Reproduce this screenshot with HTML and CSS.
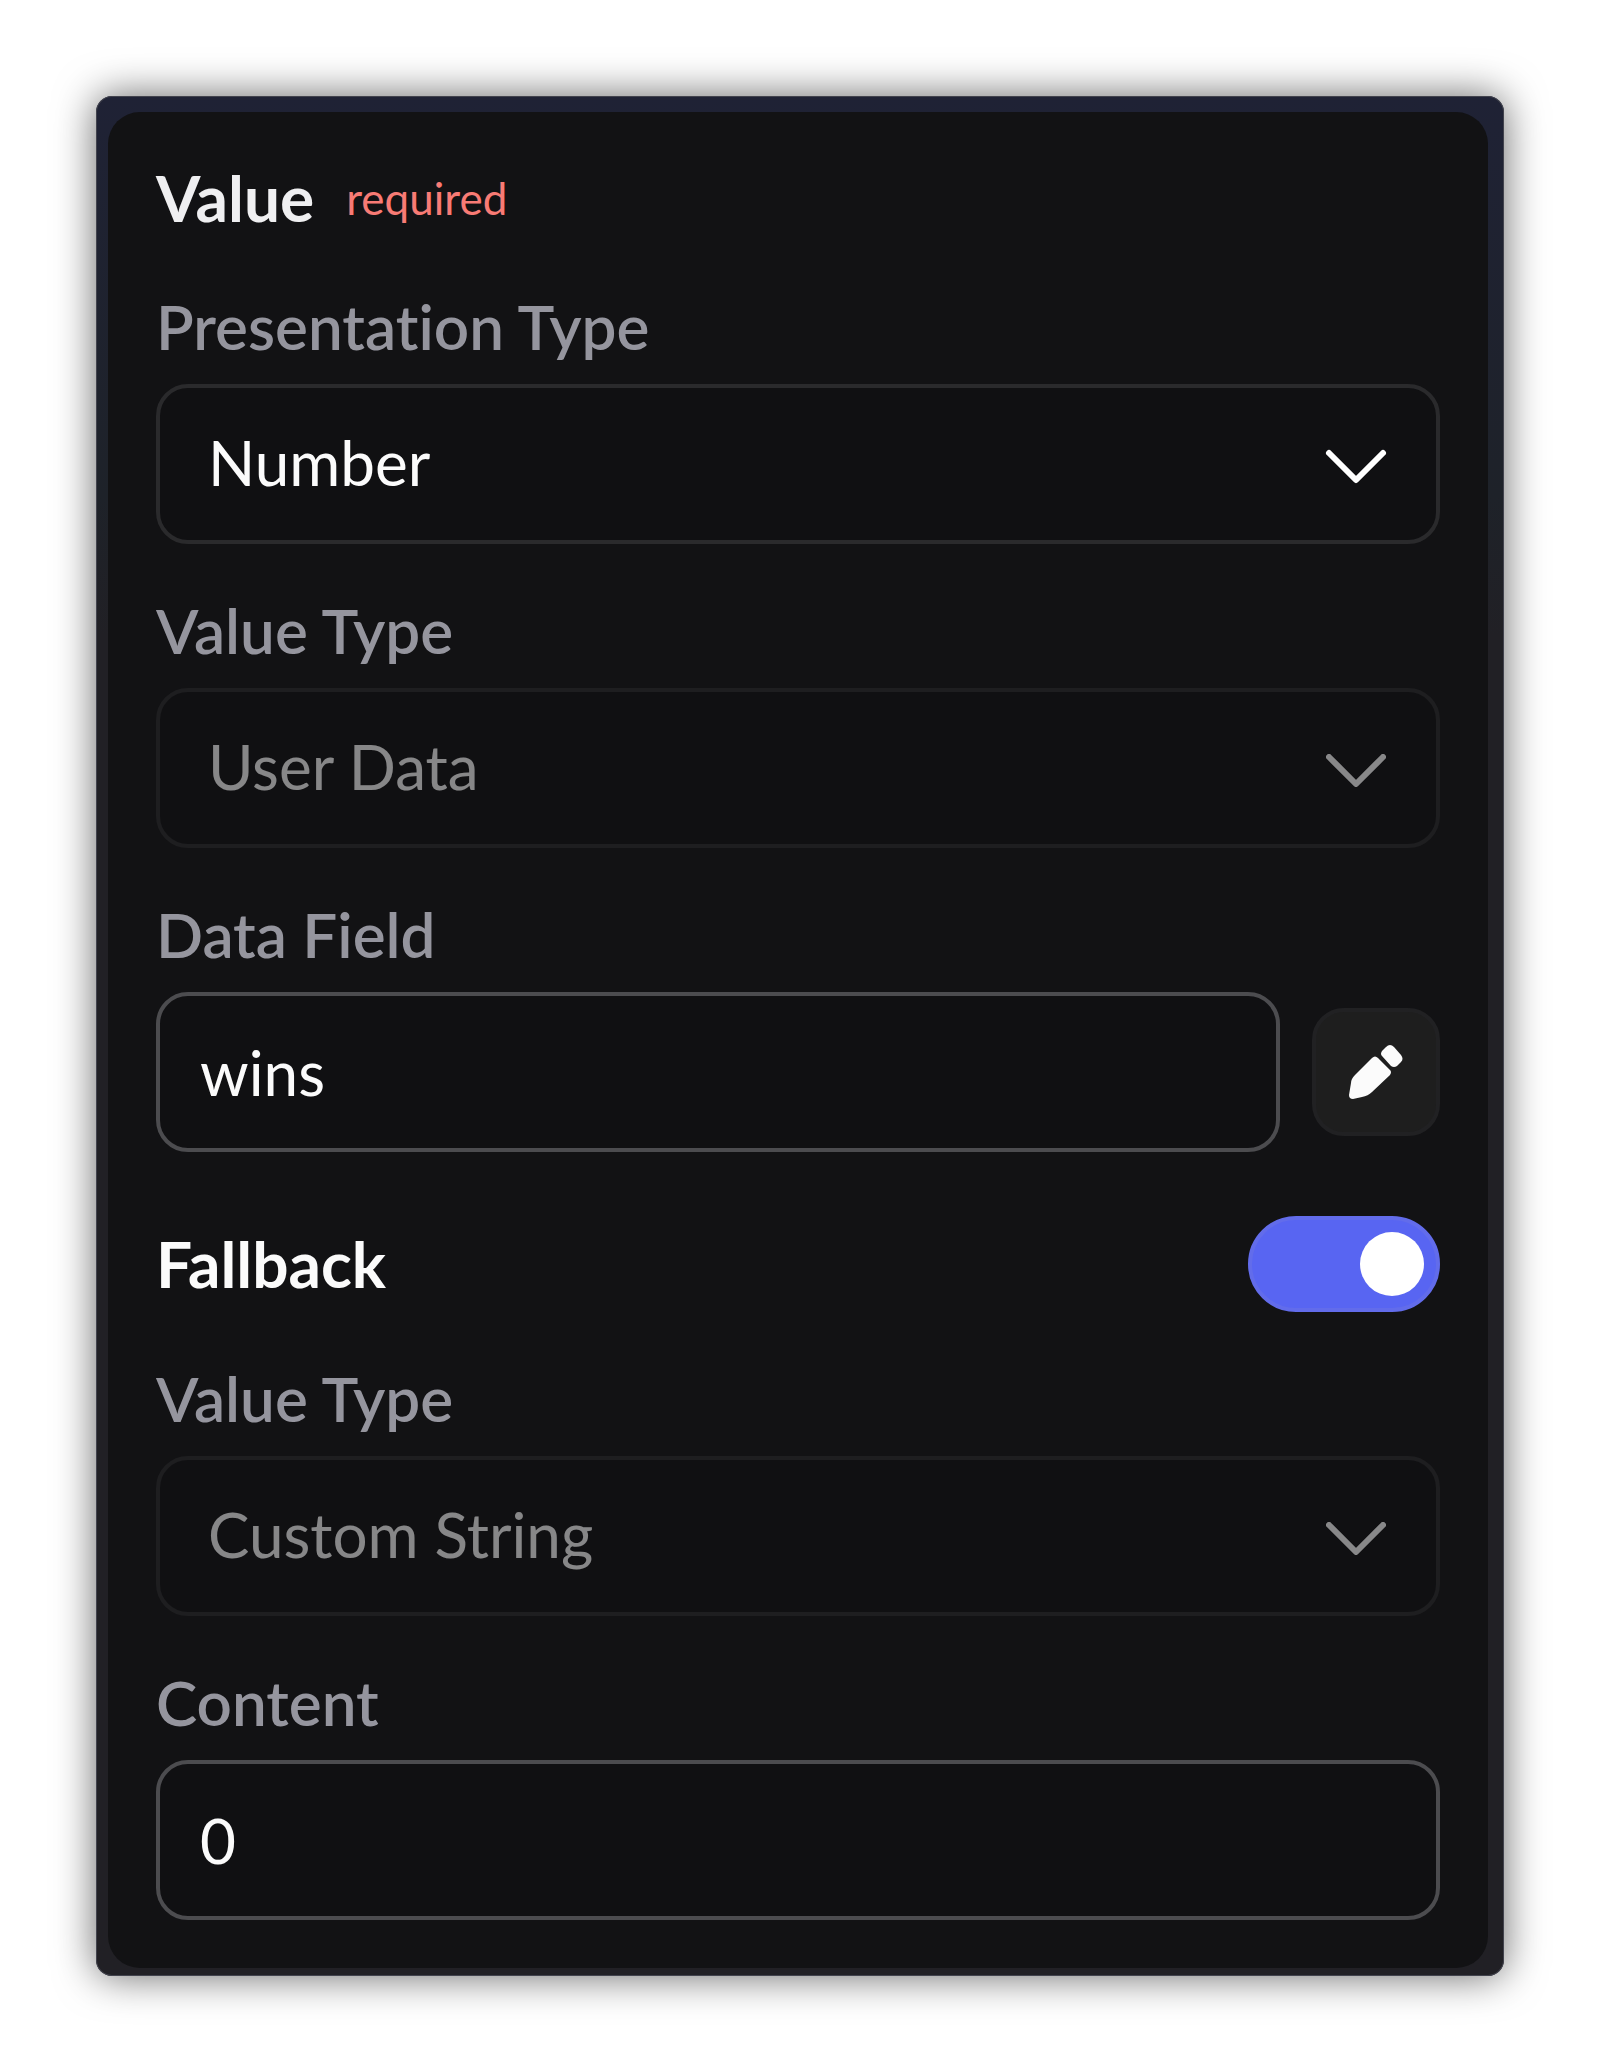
FILE: index.html
```html
<!DOCTYPE html>
<html lang="en">
<head>
  <meta charset="UTF-8" />
  <meta name="viewport" content="width=device-width, initial-scale=1.0"/>
  <title>Value</title>
  <link rel="stylesheet" href="styles.css">
</head>
<body>

  <div class="frame">
    <form class="card">
      <div class="card-title">
        <h2>Value</h2>
        <span class="required">required</span>
      </div>

      <div class="form-group">
        <label for="presentation-type">Presentation Type</label>
        <div class="select">
          <select id="presentation-type">
            <option>Number</option>
          </select>
          <svg class="chevron" viewBox="0 0 64 64"><path d="M5 21 L32 48 L59 21"/></svg>
        </div>
      </div>

      <div class="form-group">
        <label for="value-type">Value Type</label>
        <div class="select">
          <select id="value-type" disabled>
            <option>User Data</option>
          </select>
          <svg class="chevron" viewBox="0 0 64 64"><path d="M5 21 L32 48 L59 21"/></svg>
        </div>
      </div>

      <div class="form-group">
        <label for="data-field">Data Field</label>
        <div class="input-row">
          <input type="text" id="data-field" value="wins">
          <button type="button" class="edit" aria-label="Edit">
            <svg viewBox="0 0 64 64">
              <path d="M38 11 L42 7 Q46 3 50 7 L57 15 Q60 19 57 22 L53 26 Q50 28 47 26 L38 16 Q36 14 38 11 Z"/>
              <path d="M28 18 Q31 15 34 18 L46 30 Q48 32 46 35 L28 52 Q24 56 18 57 L9 59 Q5 59 5 55 L7 43 Q7 39 11 35 Z"/>
            </svg>
          </button>
        </div>
      </div>

      <div class="toggle-row">
        <label for="fallback">Fallback</label>
        <input type="checkbox" id="fallback" class="toggle" checked>
      </div>

      <div class="form-group">
        <label for="fallback-type">Value Type</label>
        <div class="select">
          <select id="fallback-type" disabled>
            <option>Custom String</option>
          </select>
          <svg class="chevron" viewBox="0 0 64 64"><path d="M5 21 L32 48 L59 21"/></svg>
        </div>
      </div>

      <div class="form-group">
        <label for="content">Content</label>
        <input type="text" id="content" value="0">
      </div>
    </form>
  </div>

</body>
</html>
```
FILE: styles.css
```css
* { box-sizing: border-box; }
body { margin: 0; padding: 96px; background: #fff; font-family: Lato, "Noto Sans", sans-serif; font-size: 62px; font-variant-ligatures: none; }
.frame { padding: 16px 16px 8px 12px; border-radius: 16px; background: linear-gradient(#1f2235, #1e2229 400px, #212025 540px); box-shadow: inset 0 0 0 1px #42434d, 0 0 40px rgba(0, 0, 0, 0.6); }
.card { display: flex; flex-direction: column; gap: 48px; padding: 48px; border-radius: 32px; background: #121214; }

/* Header */
.card-title { display: flex; align-items: center; gap: 32px; margin-bottom: 4px; line-height: 76px; }
.card-title h2 { margin: 0; font-size: 64px; font-weight: 700; color: #efeff1; }
.required { font-size: 44px; color: #f87b75; }

/* Fields */
.form-group { display: flex; flex-direction: column; gap: 20px; }
label { line-height: 76px; font-weight: 600; color: #95959e; }
select, input[type="text"] { width: 100%; height: 160px; border: 4px solid #4c4c4f; border-radius: 32px; background: #101012; color: #fbfbfb; font: inherit; outline: none; }
input[type="text"] { padding: 0 40px; }
select { appearance: none; padding: 0 120px 4px 48px; border-color: #2a2a2c; }
.select { position: relative; }
select:disabled { opacity: 0.5; color: #fbfbfb; }
.chevron { position: absolute; top: 48px; right: 52px; width: 64px; height: 64px; fill: none; stroke: #fff; stroke-width: 6; stroke-linecap: round; stroke-linejoin: round; pointer-events: none; }
select:disabled + .chevron { opacity: 0.5; }

.input-row { display: flex; align-items: center; gap: 32px; }
.input-row input[type="text"] { flex: 1; min-width: 0; }
.edit { display: flex; align-items: center; justify-content: center; flex: none; width: 128px; height: 128px; padding: 0; border: 4px solid #212123; border-radius: 32px; background: #1e1e1e; }
.edit svg { width: 64px; height: 64px; fill: #fbfbfb; }

/* Fallback switch */
.toggle-row { display: flex; align-items: center; justify-content: space-between; margin-top: 16px; }
.toggle-row label { font-size: 64px; font-weight: 700; color: #fbfbfb; }
.toggle { appearance: none; display: flex; justify-content: flex-start; width: 192px; height: 96px; margin: 0; padding: 12px; border: 4px solid #626ceb; border-radius: 48px; background: #5865f2; }
.toggle::before { content: ""; width: 64px; height: 64px; border-radius: 50%; background: #fff; }
.toggle:checked { justify-content: flex-end; }
```
